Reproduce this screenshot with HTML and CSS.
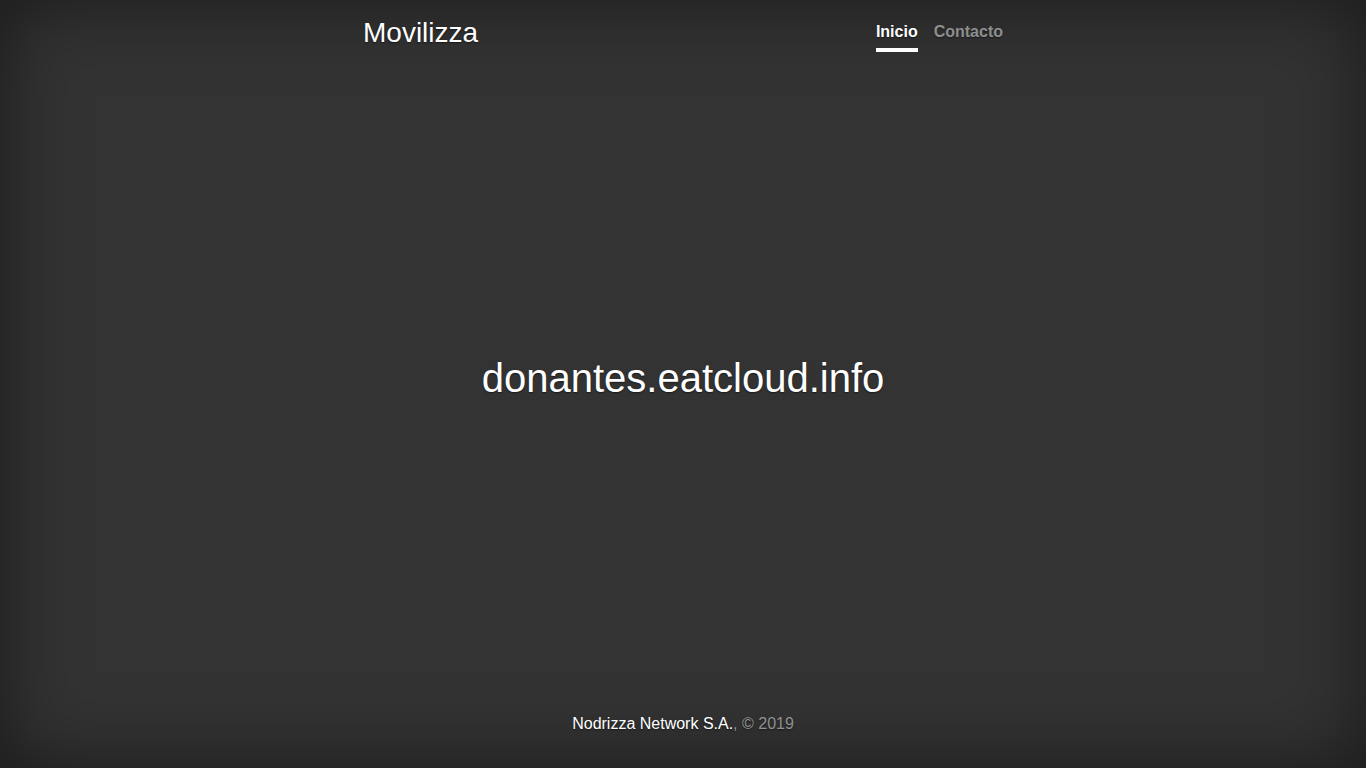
FILE: index.html
```html
<!DOCTYPE html>
<html lang="es">
<head>
<meta charset="utf-8">
<title>Movilizza</title>
<link rel="stylesheet" href="styles.css">
</head>
<body>
<div class="cover-container">
  <header class="masthead">
    <h3 class="masthead-brand">Movilizza</h3>
    <nav class="nav-masthead">
      <a class="nav-link active" href="#">Inicio</a>
      <a class="nav-link" href="#">Contacto</a>
    </nav>
  </header>
  <main class="cover">
    <h1 class="cover-heading">donantes.eatcloud.info</h1>
  </main>
  <footer class="mastfoot">
    <p><a href="#">Nodrizza Network S.A.</a>, © 2019</p>
  </footer>
</div>
</body>
</html>
```
FILE: styles.css
```css
html, body {
  height: 100%;
  margin: 0;
}
body {
  display: flex;
  background-color: #333;
  color: #fff;
  font-family: "Liberation Sans", Arial, sans-serif;
  font-size: 16px;
  line-height: 1.5;
  text-shadow: 0 0.05rem 0.1rem rgba(0,0,0,.5);
  box-shadow: inset 0 0 5rem rgba(0,0,0,.5);
}
.cover-container {
  box-sizing: border-box;
  display: flex;
  flex-direction: column;
  width: 100%;
  max-width: 42em;
  height: 100%;
  padding: 16px;
  margin: 0 auto;
}
.masthead {
  display: flex;
  justify-content: space-between;
  align-items: flex-start;
  margin-bottom: auto;
}
.masthead-brand {
  margin: 0;
  font-size: 28px;
  font-weight: 400;
  line-height: 1.2;
}
.nav-masthead {
  display: flex;
}
.nav-link {
  padding: 4px 0;
  font-weight: 700;
  color: rgba(255,255,255,.5);
  text-decoration: none;
  border-bottom: 4px solid transparent;
}
.nav-link + .nav-link {
  margin-left: 16px;
}
.nav-link.active {
  color: #fff;
  border-bottom-color: #fff;
}
.cover {
  text-align: center;
}
.cover-heading {
  margin: 0 0 8px;
  font-size: 40px;
  font-weight: 400;
  line-height: 1.2;
}
.mastfoot {
  margin-top: auto;
  text-align: center;
  color: rgba(255,255,255,.5);
}
.mastfoot p {
  margin: 0 0 16px;
}
.mastfoot a {
  color: #fff;
  text-decoration: none;
}
```
